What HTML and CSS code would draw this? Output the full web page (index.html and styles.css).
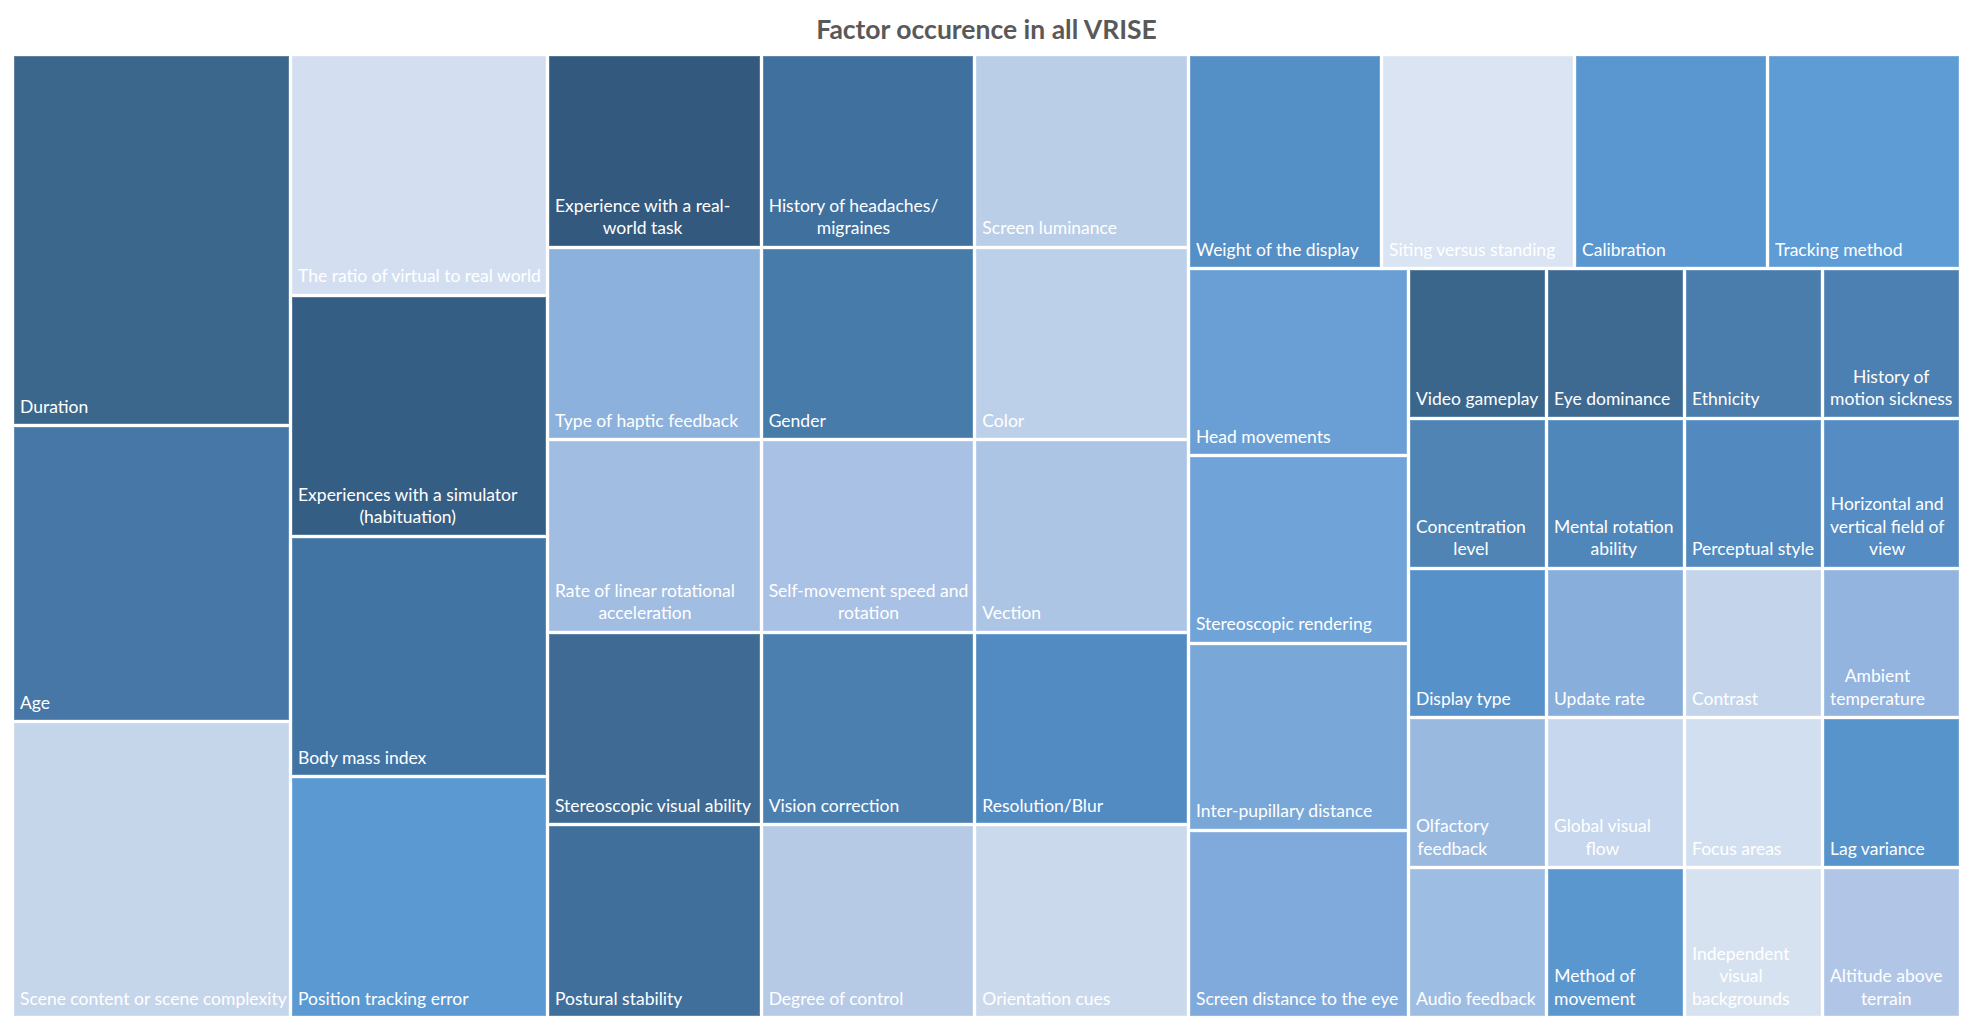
FILE: index.html
```html
<!DOCTYPE html>
<html lang="en">
<head>
<meta charset="utf-8">
<title>Factor occurence in all VRISE</title>
<link rel="stylesheet" href="styles.css">
</head>
<body>
<div class="page">
  <h1 class="title">Factor occurence in all VRISE</h1>
  <div class="treemap">
    <div class="col col-1">
      <div class="cell c-duration g369"><span class="lbl">Duration</span></div>
      <div class="cell c-age g292"><span class="lbl">Age</span></div>
      <div class="cell c-scene g292"><span class="lbl">Scene content or scene complexity</span></div>
    </div>
    <div class="col col-2">
      <div class="cell c-ratio"><span class="lbl">The ratio of virtual to real world</span></div>
      <div class="cell c-sim"><span class="lbl">Experiences with a simulator<br>(habituation)</span></div>
      <div class="cell c-bmi"><span class="lbl">Body mass index</span></div>
      <div class="cell c-pte"><span class="lbl">Position tracking error</span></div>
    </div>
    <div class="grid grid-3">
      <div class="cell c-realtask"><span class="lbl">Experience with a real-<br>world task</span></div>
      <div class="cell c-headache"><span class="lbl">History of headaches/<br>migraines</span></div>
      <div class="cell c-lumin"><span class="lbl">Screen luminance</span></div>
      <div class="cell c-haptic"><span class="lbl">Type of haptic feedback</span></div>
      <div class="cell c-gender"><span class="lbl">Gender</span></div>
      <div class="cell c-color"><span class="lbl">Color</span></div>
      <div class="cell c-rate"><span class="lbl">Rate of linear rotational<br>acceleration</span></div>
      <div class="cell c-selfmove"><span class="lbl">Self-movement speed and<br>rotation</span></div>
      <div class="cell c-vection"><span class="lbl">Vection</span></div>
      <div class="cell c-stereovis"><span class="lbl">Stereoscopic visual ability</span></div>
      <div class="cell c-vision"><span class="lbl">Vision correction</span></div>
      <div class="cell c-resol"><span class="lbl">Resolution/Blur</span></div>
      <div class="cell c-postural"><span class="lbl">Postural stability</span></div>
      <div class="cell c-control"><span class="lbl">Degree of control</span></div>
      <div class="cell c-orient"><span class="lbl">Orientation cues</span></div>
    </div>
    <div class="right">
      <div class="top-row">
        <div class="cell c-weight"><span class="lbl">Weight of the display</span></div>
        <div class="cell c-siting"><span class="lbl">Siting versus standing</span></div>
        <div class="cell c-calib"><span class="lbl">Calibration</span></div>
        <div class="cell c-tracking"><span class="lbl">Tracking method</span></div>
      </div>
      <div class="bottom-area">
        <div class="col head-col">
          <div class="cell c-headmove"><span class="lbl">Head movements</span></div>
          <div class="cell c-stereorend"><span class="lbl">Stereoscopic rendering</span></div>
          <div class="cell c-ipd"><span class="lbl">Inter-pupillary distance</span></div>
          <div class="cell c-screendist"><span class="lbl">Screen distance to the eye</span></div>
        </div>
        <div class="grid grid-4">
          <div class="cell c-video"><span class="lbl">Video gameplay</span></div>
          <div class="cell c-eye"><span class="lbl">Eye dominance</span></div>
          <div class="cell c-ethnic"><span class="lbl">Ethnicity</span></div>
          <div class="cell c-motion"><span class="lbl">History of<br>motion sickness</span></div>
          <div class="cell c-concent"><span class="lbl">Concentration<br>level</span></div>
          <div class="cell c-mental"><span class="lbl">Mental rotation<br>ability</span></div>
          <div class="cell c-percept"><span class="lbl">Perceptual style</span></div>
          <div class="cell c-fov"><span class="lbl">Horizontal and<br>vertical field of<br>view</span></div>
          <div class="cell c-dtype"><span class="lbl">Display type</span></div>
          <div class="cell c-update"><span class="lbl">Update rate</span></div>
          <div class="cell c-contrast"><span class="lbl">Contrast</span></div>
          <div class="cell c-ambient"><span class="lbl">Ambient<br>temperature</span></div>
          <div class="cell c-olfact"><span class="lbl">Olfactory<br>feedback</span></div>
          <div class="cell c-global"><span class="lbl">Global visual<br>flow</span></div>
          <div class="cell c-focus"><span class="lbl">Focus areas</span></div>
          <div class="cell c-lag"><span class="lbl">Lag variance</span></div>
          <div class="cell c-audio"><span class="lbl">Audio feedback</span></div>
          <div class="cell c-method"><span class="lbl">Method of<br>movement</span></div>
          <div class="cell c-indep"><span class="lbl">Independent<br>visual<br>backgrounds</span></div>
          <div class="cell c-altitude"><span class="lbl">Altitude above<br>terrain</span></div>
        </div>
      </div>
    </div>
  </div>
</div>
</body>
</html>
```

FILE: styles.css
```css
* { box-sizing: border-box; }

html, body {
  margin: 0;
  padding: 0;
  background: #ffffff;
}

body {
  font-family: Lato, "Open Sans", "Liberation Sans", sans-serif;
  width: 1973px;
  height: 1031px;
  overflow: hidden;
}

.page {
  width: 1973px;
  height: 1031px;
}

.title {
  margin: 0;
  height: 56px;
  padding-top: 13px;
  font-size: 26.5px;
  line-height: 32px;
  font-weight: 700;
  color: #595959;
  text-align: center;
}

.treemap {
  margin-left: 14px;
  width: 1945px;
  height: 960px;
  display: flex;
  gap: 3px;
}

.col {
  display: flex;
  flex-direction: column;
  gap: 3px;
}

.col-1 { width: 275px; flex: none; }
.col-2 { width: 254px; flex: none; }
.col-2 .cell { flex: 1 1 0; }

.g369 { flex: 369 1 0; }
.g292 { flex: 292 1 0; }

.grid {
  display: grid;
  gap: 3px;
}

.grid-3 {
  width: 638px;
  flex: none;
  grid-template-columns: repeat(3, 1fr);
  grid-template-rows: repeat(5, 1fr);
}

.right {
  flex: 1 1 0;
  display: flex;
  flex-direction: column;
  gap: 3px;
}

.top-row {
  height: 211px;
  flex: none;
  display: flex;
  gap: 3px;
}

.top-row .cell { flex: 1 1 0; }

.bottom-area {
  flex: 1 1 0;
  display: flex;
  gap: 3px;
}

.head-col { width: 217px; flex: none; }
.head-col .cell { flex: 1 1 0; }

.grid-4 {
  flex: 1 1 0;
  grid-template-columns: repeat(4, 1fr);
  grid-template-rows: repeat(5, 1fr);
}

.cell {
  display: flex;
  flex-direction: column;
  justify-content: flex-end;
  align-items: flex-start;
  padding: 0 5px 6px 6px;
  min-width: 0;
  min-height: 0;
  overflow: hidden;
  box-shadow: inset 0 0 0 1px rgba(255, 255, 255, 0.18);
}

.lbl {
  display: inline-block;
  text-align: center;
  white-space: nowrap;
  color: #ffffff;
  font-size: 17.5px;
  line-height: 22.5px;
}

/* column 1 */
.c-duration { background: #3b678c; }
.c-age { background: #4677a7; }
.c-scene { background: #c5d5ea; }

/* column 2 */
.c-ratio { background: #d3dff0; }
.c-sim { background: #355e85; }
.c-bmi { background: #4274a3; }
.c-pte { background: #5a99d2; }

/* middle grid */
.c-realtask { background: #33597e; }
.c-haptic { background: #8cb1dc; }
.c-rate { background: #a1bde2; }
.c-stereovis { background: #3e6a94; }
.c-postural { background: #416f9b; }

.c-headache { background: #40709e; }
.c-gender { background: #477baa; }
.c-selfmove { background: #a8c1e5; }
.c-vision { background: #4b7fb0; }
.c-control { background: #b6cae6; }

.c-lumin { background: #bacee8; }
.c-color { background: #bdd0e9; }
.c-vection { background: #acc5e4; }
.c-resol { background: #528bc1; }
.c-orient { background: #cbd9ed; }

/* right block top row */
.c-weight { background: #548fc6; }
.c-siting { background: #dbe4f3; }
.c-calib { background: #5a97d0; }
.c-tracking { background: #5e9cd6; }

/* head column */
.c-headmove { background: #6a9fd5; }
.c-stereorend { background: #70a3d7; }
.c-ipd { background: #78a7d8; }
.c-screendist { background: #80aadb; }

/* small grid */
.c-video { background: #3a668c; }
.c-eye { background: #3e6a92; }
.c-ethnic { background: #4a7cac; }
.c-motion { background: #4d80b2; }

.c-concent { background: #4f84b5; }
.c-mental { background: #5087ba; }
.c-percept { background: #528abf; }
.c-fov { background: #548cc3; }

.c-dtype { background: #5791c9; }
.c-update { background: #88aedb; }
.c-contrast { background: #c3d4eb; }
.c-ambient { background: #92b4de; }

.c-olfact { background: #99b9df; }
.c-global { background: #c7d7ed; }
.c-focus { background: #d2dff0; }
.c-lag { background: #5794cc; }

.c-audio { background: #9ebde2; }
.c-method { background: #5b97cf; }
.c-indep { background: #d7e2f1; }
.c-altitude { background: #b1c6e6; }
```
